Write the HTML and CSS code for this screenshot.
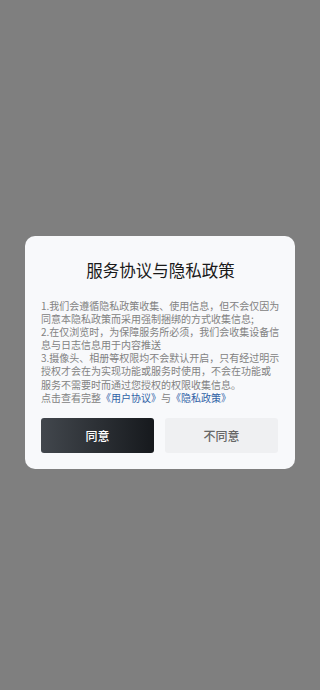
FILE: index.html
```html
<!DOCTYPE html>
<html lang="zh-CN">
<head>
    <meta charset="UTF-8">
    <meta name="viewport" content="width=device-width, initial-scale=1.0">
    <title>服务协议与隐私政策</title>
    <link rel="stylesheet" href="styles.css">
</head>
<body>
    <div class="mask">
        <div class="dialog">
            <h2 class="dialog-title">服务协议与隐私政策</h2>
            <div class="dialog-body">
                <p>1.我们会遵循隐私政策收集、使用信息，但不会仅因为同意本隐私政策而采用强制捆绑的方式收集信息;</p>
                <p>2.在仅浏览时，为保障服务所必须，我们会收集设备信息与日志信息用于内容推送</p>
                <p>3.摄像头、相册等权限均不会默认开启，只有经过明示授权才会在为实现功能或服务时使用，不会在功能或服务不需要时而通过您授权的权限收集信息。</p>
                <p>点击查看完整<a href="#">《用户协议》</a>与<a href="#">《隐私政策》</a></p>
            </div>
            <div class="dialog-actions">
                <button class="btn btn-agree">同意</button>
                <button class="btn btn-refuse">不同意</button>
            </div>
        </div>
    </div>
</body>
</html>
```

FILE: styles.css
```css
* {
    box-sizing: border-box;
    margin: 0;
    padding: 0;
    font-family: "Noto Sans CJK SC", "Noto Sans", sans-serif;
}

html, body {
    height: 100%;
}

body {
    background-color: #7f7f7f;
}

.mask {
    padding: 236px 25px 0;
}

.dialog {
    background: #f8f9fb;
    border-radius: 10px;
    padding: 20px 15px 16px 16px;
}

.dialog-title {
    text-align: center;
    font-size: 16.5px;
    font-weight: 400;
    line-height: 28px;
    color: #1a1a1a;
    margin-bottom: 15px;
}

.dialog-body {
    font-size: 10px;
    line-height: 13.1px;
    color: #828282;
}

.dialog-body a {
    display: inline-block;
    line-height: 13px;
    color: #2f62a6;
    text-decoration: none;
}

.dialog-actions {
    display: flex;
    gap: 11px;
    margin-top: 14px;
    padding-right: 2px;
}

.btn {
    flex: 1;
    height: 35px;
    border: none;
    border-radius: 3px;
    font-size: 12px;
    font-weight: 500;
}

.btn-agree {
    background: linear-gradient(90deg, #42474d, #16191d);
    color: #fff;
}

.btn-refuse {
    background: #eff0f2;
    color: #666;
}
```
